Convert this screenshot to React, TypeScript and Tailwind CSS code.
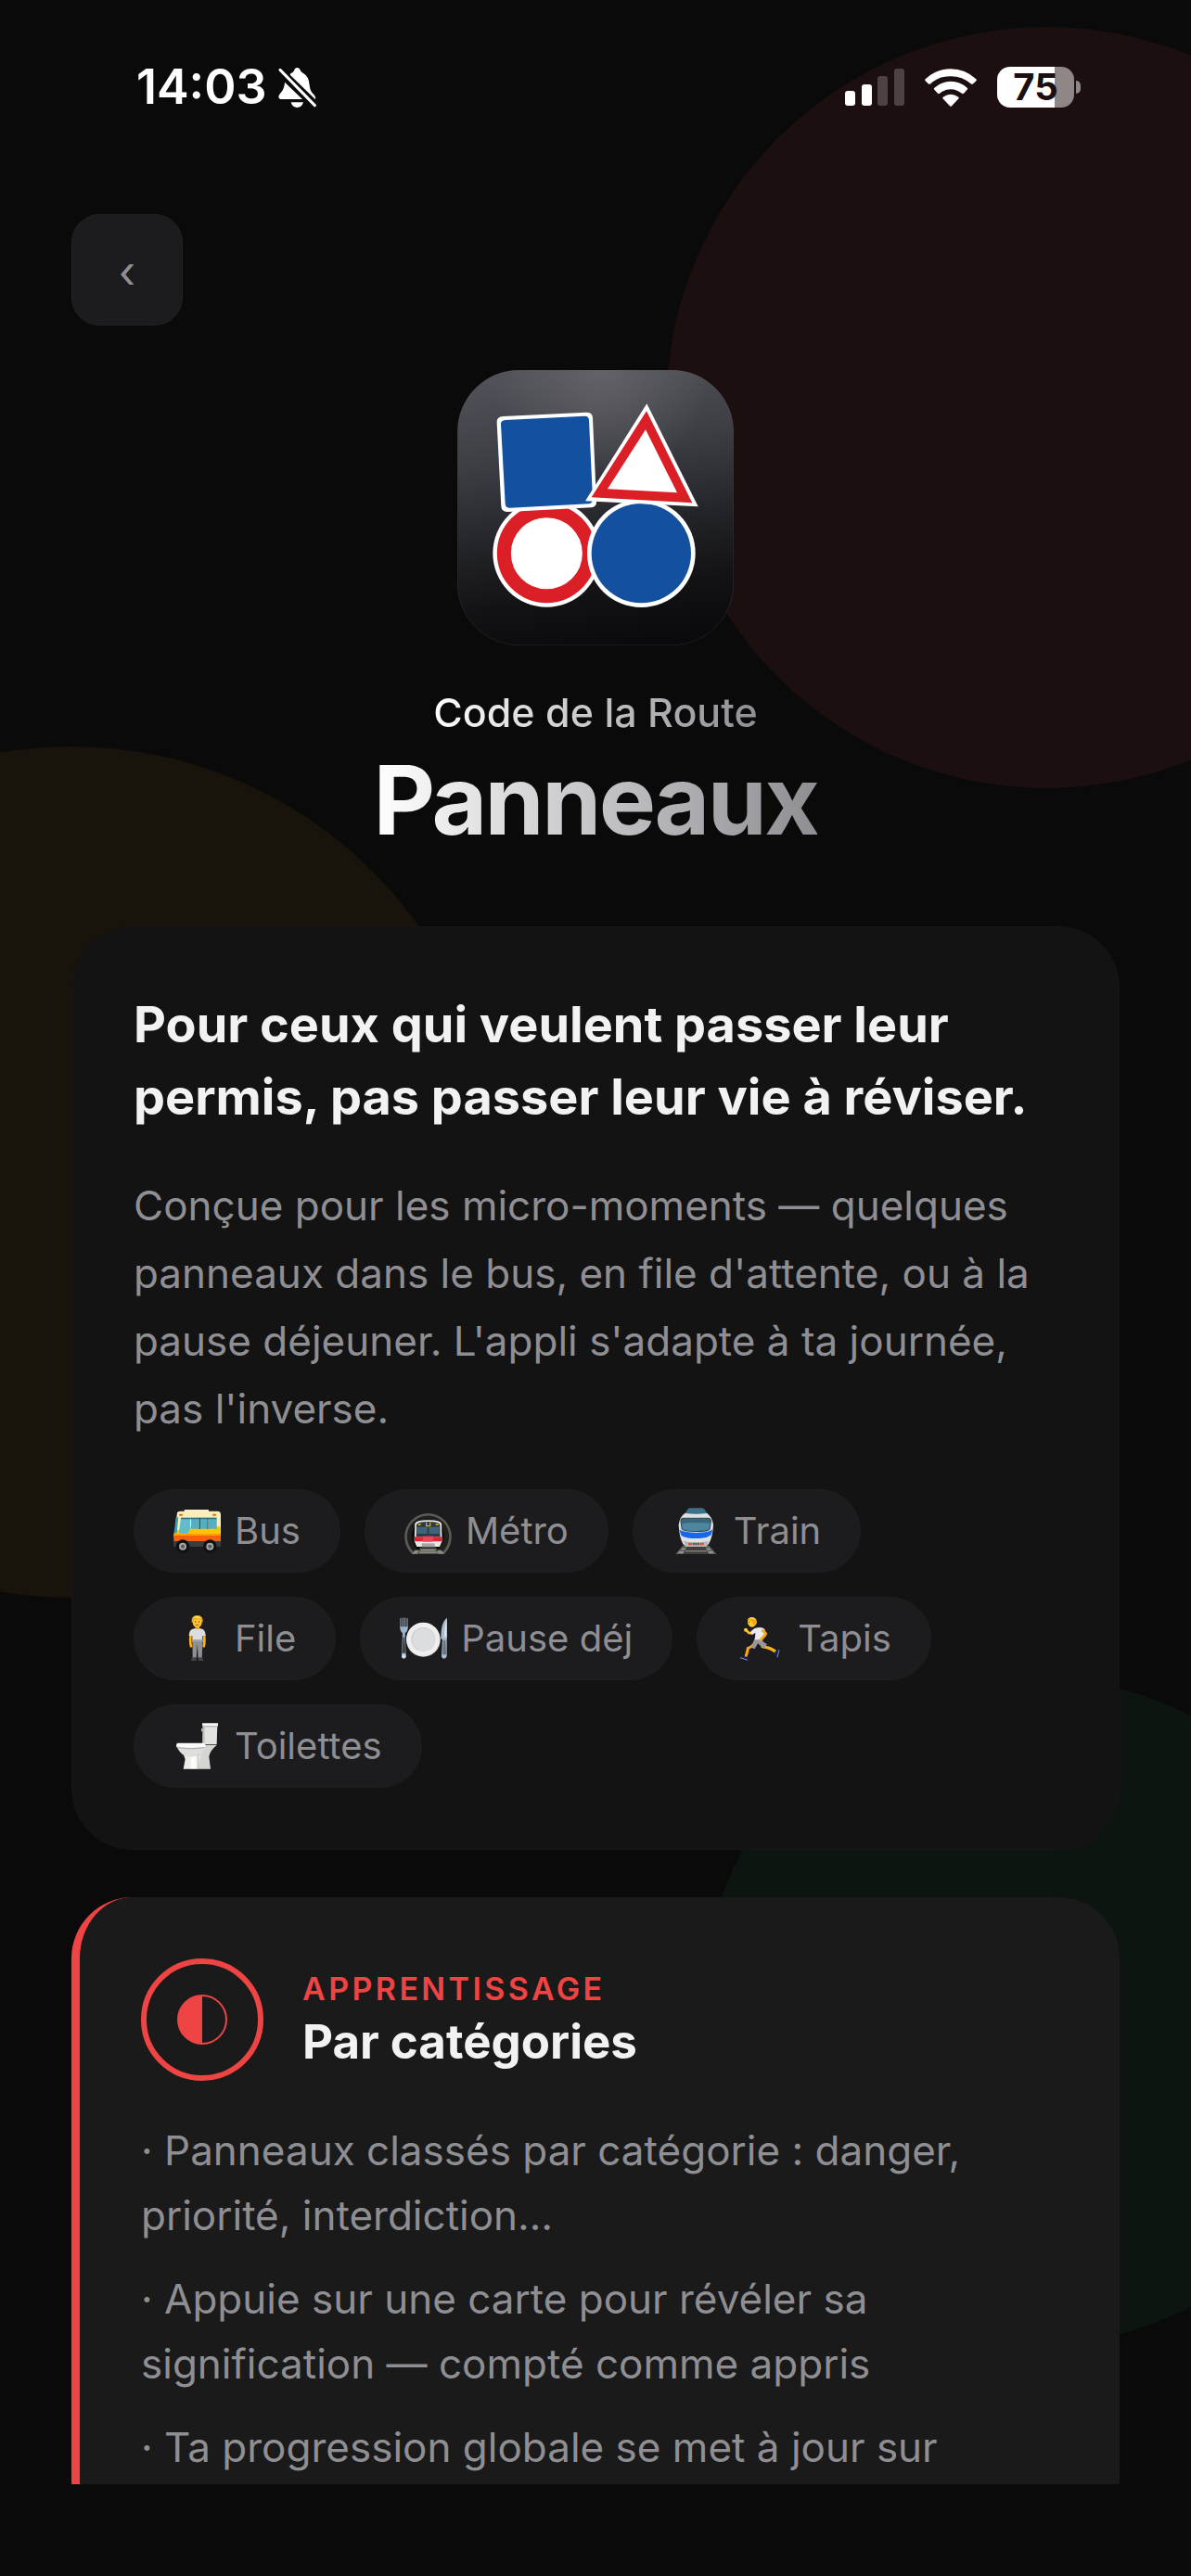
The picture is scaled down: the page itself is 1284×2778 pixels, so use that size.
import React from 'react';

interface Place {
  label: string;
  icon: React.ReactNode;
}

const BusIcon = () => (
  <svg viewBox="0 0 153 153" className="size-[51px]">
    <path d="M36 6h77l3 8H34z" fill="#f7efc9" />
    <path d="M12 16q2-5 9-5h122q9 0 10 10v70H3z" fill="#fbeebc" />
    <path d="M3 72h45l8-11h96v36H1z" fill="#ffc400" />
    <path d="M1 84h152v24H1z" fill="#f9620c" />
    <path d="M1 84h152v6H1z" fill="#ff9f00" />
    <path d="M8 30l8 1-5 51H2z" fill="#3f9db3" />
    <path d="M24 32h30v36l-7 15H22q-5 0-4-7z" fill="#62bccd" />
    <path d="M57 32h26v36H57zM87 32h22v36H87zM112 32h25q3 0 3 4v32h-28z" fill="#54afc2" />
    <path d="M24 32h116v5H24z" fill="#2f7484" />
    <path d="M83 32h4v37h-4zM109 32h3v37h-3z" fill="#2b5664" />
    <path d="M0 108h153v18H0z" fill="#3b3c40" />
    <rect x="18" y="20" width="12" height="6" rx="2" fill="#e8720c" />
    <rect x="126" y="20" width="12" height="6" rx="2" fill="#e8720c" />
    <circle cx="30" cy="125" r="22" fill="#101113" />
    <circle cx="118" cy="125" r="22" fill="#101113" />
    <circle cx="30" cy="125" r="12" fill="#a3a5a8" />
    <circle cx="118" cy="125" r="12" fill="#a3a5a8" />
    <circle cx="30" cy="125" r="6" fill="#55585c" />
    <circle cx="118" cy="125" r="6" fill="#55585c" />
  </svg>
);

const MetroIcon = () => (
  <svg viewBox="0 0 153 153" className="size-[51px]">
    <path d="M24 149A76 76 0 1 1 129 149z" fill="#5a5a57" />
    <path d="M30 143A68 68 0 1 1 123 143z" fill="#20201f" />
    <ellipse cx="76" cy="92" rx="52" ry="54" fill="#060606" />
    <path d="M34 137h85l10 12H24z" fill="#8b8b85" />
    <path d="M50 128h54l6 21H42z" fill="#45453f" />
    <path d="M52 137h49M47 144h60" stroke="#c2c2ba" strokeWidth="3" />
    <path d="M34 52q2-12 43-12t43 12l2 56-8 18H40l-8-18z" fill="#e9e9ea" />
    <path d="M39 54q3-9 38-9t38 9l1 40H38z" fill="#32383d" />
    <path d="M40 62h34v28H40zM79 62h34v28H79z" fill="#41647a" />
    <path d="M40 84h34v7H40zM79 84h34v7H79z" fill="#263d4b" />
    <path d="M71 47v12h12V47" fill="none" stroke="#c6b91e" strokeWidth="4" />
    <path d="M44 54h9M101 54h9" stroke="#d8c928" strokeWidth="5" />
    <path d="M33 94h88l1 15H32z" fill="#df2436" />
    <path d="M60 92h33v18H60z" fill="#f0435a" />
    <circle cx="44" cy="117" r="4" fill="#f3e9a0" />
    <circle cx="109" cy="117" r="4" fill="#f3e9a0" />
    <path d="M56 115h42v12H56z" fill="#a5a6a8" />
  </svg>
);

const TrainIcon = () => (
  <svg viewBox="0 0 153 153" className="size-[51px]">
    <path d="M34 122h84l24 28H10z" fill="#64625f" />
    <path d="M30 134h92M20 144h112" stroke="#a4a19d" strokeWidth="4" />
    <path d="M48 122h56l14 28H34z" fill="#403f3e" />
    <path d="M42 140h69" stroke="#84817e" strokeWidth="4" />
    <path d="M43 16q33-8 66 0 20 13 23 39-1 39-15 62l-9 8H43l-9-8Q21 94 20 55q3-26 23-39z" fill="#dfe0e4" />
    <path d="M54 1h43q11 6 13 17-34 5-67 0Q45 7 54 1z" fill="#3e7188" />
    <path d="M36 32h79q9 0 11 10l-4 27q-3 9-46 9t-47-9l-4-27q2-10 11-10z" fill="#29414d" />
    <path d="M38 35h75q9 0 10 8l-4 25q-3 7-43 7t-44-7l-4-25q2-8 10-8z" fill="#4c879f" />
    <path d="M28 43q2-8 10-8h75q9 0 10 8l-1 8q-46-7-93 1z" fill="#3b6579" />
    <path d="M22 70q9 10 54 11 44-1 54-11l-5 18q-14 11-49 11T28 89z" fill="#1768e8" />
    <path d="M35 107q38 10 82 0l-7 18H43z" fill="#b5b6b9" />
    <rect x="51" y="113" width="13" height="8" rx="2" fill="#e94d2a" />
    <rect x="88" y="113" width="13" height="8" rx="2" fill="#e94d2a" />
    <path d="M67 113h4v8h-4zM74 113h4v8h-4zM81 113h4v8h-4z" fill="#303136" />
  </svg>
);

const PersonIcon = () => (
  <svg viewBox="0 0 153 153" className="size-[51px]">
    <path d="M71 34h13v14H71z" fill="#e89a0b" />
    <path d="M56 62q-3 27 1 38M99 62q3 27-1 38" fill="none" stroke="#fcb414" strokeWidth="8" strokeLinecap="round" />
    <path d="M62 44l9-2q7 6 14 0l8 2q10 2 11 22H94v20H61V66H50q1-20 12-22z" fill="#dcdde1" />
    <path d="M61 78h34l-3 60H80l-3-45-3 45H62z" fill="#8e8e93" />
    <path d="M61 78h34v7H61z" fill="#a3a3a8" />
    <path d="M57 147q0-9 9-11h8v11zM97 147q0-9-9-11h-8v11z" fill="#434349" />
    <ellipse cx="77" cy="22" rx="15" ry="18" fill="#ffc52e" />
    <path d="M59 22q-3-21 18-22 20 1 18 22l-4 1q0-10-6-11-13 3-19 1l-3 10z" fill="#f2ab10" />
    <path d="M63 8q14-11 28 2-14-3-28-2z" fill="#ffeaa0" />
    <circle cx="71" cy="21" r="2" fill="#4c3413" />
    <circle cx="83" cy="21" r="2" fill="#4c3413" />
    <path d="M73 31h8" stroke="#c64a24" strokeWidth="3" strokeLinecap="round" />
  </svg>
);

const PlateIcon = () => (
  <svg viewBox="0 0 153 153" className="size-[51px]">
    <circle cx="76" cy="79" r="55" fill="#d8d9db" />
    <circle cx="76" cy="77" r="54" fill="#eeeeef" />
    <circle cx="76" cy="78" r="39" fill="#c6cad0" />
    <circle cx="77" cy="79" r="37" fill="#dcdddf" />
    <path d="M3 10v32M10 9v33M17 9v33M24 10v32" stroke="#a2b2c4" strokeWidth="3" strokeLinecap="round" />
    <path d="M1 37h25q0 17-9 20l3 76q-1 6-7 6t-7-6l3-76q-8-3-8-20z" fill="#9cb3cb" />
    <path d="M11 70h5l3 52H7z" fill="#3f444a" />
    <circle cx="13" cy="133" r="7" fill="#c7dcf3" />
    <path d="M153 8v66l-1 4v55q-2 7-9 7t-8-7l3-54-5-4q0-54 20-67z" fill="#a9bccf" />
    <path d="M151 16v54h-7q0-32 7-54z" fill="#d9e6f2" />
    <path d="M141 80h7l2 47h-12z" fill="#687580" />
  </svg>
);

const RunnerIcon = () => (
  <svg viewBox="0 0 153 153" className="size-[51px]">
    <path d="M61 84q-8 18-24 22-1 9-6 25" fill="none" stroke="#f9a90b" strokeWidth="9" strokeLinecap="round" strokeLinejoin="round" />
    <path d="M84 101q26 4 42 16" fill="none" stroke="#fbb316" strokeWidth="10" strokeLinecap="round" />
    <path d="M11 132l28 3 1 4-5 6q-14-2-25-9z" fill="#14205e" />
    <path d="M12 137l24 8" stroke="#c7cbd8" strokeWidth="2" />
    <path d="M134 106l5 3-5 27-6 1-3-19z" fill="#14205e" />
    <path d="M138 112l-6 24" stroke="#c7cbd8" strokeWidth="2" />
    <path d="M52 58l-12-1-10-11" fill="none" stroke="#fdb81b" strokeWidth="8" strokeLinecap="round" strokeLinejoin="round" />
    <circle cx="30" cy="47" r="6" fill="#ffca38" />
    <path d="M59 42q23-7 33 4-2 25-11 37H57q5-17 4-26l-12 5-5-7q8-9 15-13z" fill="#e9eaed" />
    <path d="M58 79h25q2 8 16 14l-10 13q-11-5-20-15l-10 18-12-5q6-13 11-25z" fill="#96979c" />
    <path d="M85 50q13 8 8 13L79 79" fill="none" stroke="#f9a80d" strokeWidth="9" strokeLinecap="round" strokeLinejoin="round" />
    <ellipse cx="50" cy="22" rx="14" ry="16" fill="#ffc933" />
    <path d="M35 15Q40 4 52 6q15 3 14 19l-7 10-8-12q-1-8-16-8z" fill="#f0a911" />
    <path d="M40 11q12-8 22 3-10-4-22-3z" fill="#ffe58a" />
    <circle cx="41" cy="22" r="2" fill="#4c3413" />
  </svg>
);

const ToiletIcon = () => (
  <svg viewBox="0 0 153 153" className="size-[51px]">
    <path d="M95 6h47l-2 64H94z" fill="#e2e2e0" />
    <path d="M95 10h6v60h-6z" fill="#c3c3c1" />
    <path d="M93 1h51v9H94z" fill="#f6f6f5" />
    <path d="M94 10h49v3H94z" fill="#a9a9a7" />
    <path d="M90 18h5v10h-5z" fill="#b9b9b7" />
    <path d="M92 72h48q-22 18-25 37l5 40H78l6-50z" fill="#d5d5d3" />
    <path d="M33 104h55l-8 45H32l6-32z" fill="#ececeb" />
    <path d="M56 108h17v40H56z" fill="#fbfbfb" />
    <path d="M80 106v43" stroke="#9d9d9b" strokeWidth="2" />
    <path d="M10 74h92q-2 18-14 27-22 14-50 6-20-10-28-33z" fill="#dededc" />
    <path d="M14 65h84q6 2 6 7t-6 8H15q-7-2-6-9 1-5 5-6z" fill="#fafafa" />
    <path d="M11 80q46 7 89 0" fill="none" stroke="#a5a5a3" strokeWidth="3" />
  </svg>
);

const PLACES: Place[] = [
  { label: 'Bus', icon: <BusIcon /> },
  { label: 'Métro', icon: <MetroIcon /> },
  { label: 'Train', icon: <TrainIcon /> },
  { label: 'File', icon: <PersonIcon /> },
  { label: 'Pause déj', icon: <PlateIcon /> },
  { label: 'Tapis', icon: <RunnerIcon /> },
  { label: 'Toilettes', icon: <ToiletIcon /> },
];

const FEATURES = [
  'Panneaux classés par catégorie : danger, priorité, interdiction…',
  'Appuie sur une carte pour révéler sa signification — compté comme appris',
  'Ta progression globale se met à jour sur',
];

const StatusBar = () => (
  <div className="flex h-[188px] shrink-0 items-center justify-between pr-[119px] pl-[147px] text-white">
    <div className="flex items-center gap-3">
      <span className="text-[52px] leading-[60px] font-semibold">14:03</span>
      {/* muted bell */}
      <svg viewBox="0 0 123 135" className="h-[45px] w-[41px]" fill="currentColor">
        <path d="M40 22q10-4 11-9 3-10 10-10t11 10q1 4 9 8 18 10 20 38 1 20 16 33 6 8 3 14L38 26z" />
        <path d="M21 50l57 55H9q-8-1-8-9 1-5 7-12 12-13 13-34z" />
        <path d="M41 115h40q-5 17-20 17t-20-17z" />
        <path d="M6 10l112 115" stroke="currentColor" strokeWidth="9" strokeLinecap="round" />
      </svg>
    </div>
    <div className="flex items-center gap-[22px]">
      <svg viewBox="0 0 64 40" className="h-[40px] w-[64px]" fill="currentColor">
        <rect x="0" y="24" width="11" height="16" rx="3" />
        <rect x="18" y="17" width="11" height="23" rx="3" />
        <rect x="35" y="8" width="11" height="32" rx="3" opacity="0.22" />
        <rect x="53" y="0" width="11" height="40" rx="3" opacity="0.22" />
      </svg>
      <svg viewBox="0 0 168 122" className="h-[41px] w-[56px]" fill="currentColor">
        <path d="M84 0q47 0 82 33 3 3 0 6l-10 10q-3 2-6 0-28-25-66-25T18 49q-3 2-6 0L2 39q-3-3 0-6Q37 0 84 0z" />
        <path d="M84 41q30 0 53 21 3 3 0 6l-11 12q-3 2-6 0-16-14-36-14T48 80q-3 2-6 0L31 68q-3-3 0-6 23-21 53-21z" />
        <path d="M84 83q13 0 24 8 4 3 1 6l-22 23q-3 3-6 0L59 97q-3-3 1-6 11-8 24-8z" />
      </svg>
      <div className="flex items-center gap-[2px]">
        <div className="flex h-[44px] w-[83px] items-center justify-center rounded-[14px] bg-linear-to-r from-white from-75% to-[#8e8786] to-75% text-[40px] leading-[44px] font-bold text-[#1b0f0f]">
          75
        </div>
        <div className="h-[14px] w-[5px] rounded-r-full bg-[#8e8786]" />
      </div>
    </div>
  </div>
);

const AppIcon = () => (
  <svg viewBox="0 0 894 891" className="h-[297px] w-[298px]">
    <defs>
      <linearGradient id="tile" x1="0.45" y1="0" x2="0.6" y2="1">
        <stop offset="0" stopColor="#505158" />
        <stop offset="0.3" stopColor="#3c3d43" />
        <stop offset="0.6" stopColor="#212226" />
        <stop offset="0.8" stopColor="#131316" />
        <stop offset="1" stopColor="#0a0a0e" />
      </linearGradient>
      <radialGradient id="shine" cx="0.52" cy="0" r="0.4">
        <stop offset="0" stopColor="#6a6a6e" stopOpacity="0.7" />
        <stop offset="1" stopColor="#6a6a6e" stopOpacity="0" />
      </radialGradient>
    </defs>
    <rect x="1" y="1" width="892" height="889" rx="198" fill="url(#tile)" />
    <rect x="1" y="1" width="892" height="889" rx="198" fill="url(#shine)" stroke="#ffffff" strokeOpacity="0.08" strokeWidth="3" />
    <circle cx="289" cy="593" r="174" fill="#fff" />
    <circle cx="289" cy="593" r="138" fill="none" stroke="#da1f26" strokeWidth="45" />
    <path d="M148 150L418 137Q437 136 438 155L450 425Q451 443 433 445L163 459Q144 460 142 442L128 170Q127 151 148 150z" fill="#fff" />
    <path d="M155 162L411 149Q425 148 426 162L438 417Q439 431 425 433L170 446Q156 447 155 433L141 177Q140 163 155 162z" fill="#13509f" />
    <circle cx="595" cy="593" r="175" fill="#fff" />
    <circle cx="595" cy="593" r="161" fill="#13509f" />
    <path d="M613 109L779 442L414 424z" fill="#fff" />
    <path d="M612 133L760 430L434 412z" fill="#da1f26" />
    <path d="M609 193L711 397L486 385z" fill="#fff" />
  </svg>
);

const App: React.FC = () => {
  return (
    <div className="relative isolate flex h-screen flex-col overflow-hidden bg-[#0a0a0a] font-[Inter,sans-serif]">
      {/* background discs */}
      <div className="absolute top-[29px] right-[-255px] -z-10 size-[821px] rounded-full bg-[#1b0f0f]" />
      <div className="absolute top-[805px] left-[-382px] -z-10 size-[918px] rounded-full bg-[#18130b]" />
      <div className="absolute top-[1809px] right-[-192px] -z-10 size-[720px] rounded-full bg-[#0d1511]" />

      <StatusBar />

      <main className="min-h-0 flex-1 overflow-hidden px-[77px] pt-[43px]">
        <button
          type="button"
          aria-label="Retour"
          className="flex size-[120px] items-center justify-center rounded-[30px] border border-[#222224] bg-[#1c1c1e] pt-1 text-[48px] leading-[60px] text-[#8e8e93]"
        >
          ‹
        </button>

        <header className="mt-12 flex flex-col items-center">
          <AppIcon />
          <p className="mt-11 bg-linear-to-r from-white to-[#8e8e93] bg-clip-text text-[43px] leading-[56px] font-medium text-transparent">
            Code de la Route
          </p>
          <h1 className="mt-[11px] bg-linear-to-r from-white to-[#8e8e93] bg-clip-text text-[103px] leading-[112px] font-bold tracking-tight text-transparent">
            Panneaux
          </h1>
        </header>

        <section className="mt-20 rounded-[66px] border border-[#161616] bg-[#131313] p-[66px]">
          <h2 className="text-[54px] leading-[78px] font-bold text-[#f2f2f2]">
            Pour ceux qui veulent passer leur permis, pas passer leur vie à réviser.
          </h2>
          <p className="mt-[42px] text-[44px] leading-[73px] text-[#8e8e93]">
            Conçue pour les micro-moments — quelques panneaux dans le bus, en file d'attente, ou à la pause
            déjeuner. L'appli s'adapte à ta journée, pas l'inverse.
          </p>
          <ul className="mt-[50px] flex flex-wrap gap-[26px]">
            {PLACES.map((place) => (
              <li
                key={place.label}
                className="flex h-[90px] items-center gap-[15px] rounded-full border border-[#1f1f21] bg-[#1c1c1e] px-[42px] text-[40px] leading-[48px] text-[#8e8e93]"
              >
                {place.icon}
                {place.label}
              </li>
            ))}
          </ul>
        </section>

        <section className="mt-[51px] rounded-[66px] border-l-[9px] border-[#ef4444] bg-[#1a1a1a] p-[66px]">
          <div className="flex items-center gap-[42px]">
            <div className="flex size-[132px] items-center justify-center rounded-full border-[6px] border-[#ef4444]">
              <svg viewBox="0 0 54 54" className="size-[54px]">
                <circle cx="27" cy="27" r="26" fill="none" stroke="#ef4444" strokeWidth="2" />
                <path d="M27 1a26 26 0 0 0 0 52z" fill="#ef4444" />
              </svg>
            </div>
            <div className="flex flex-col gap-[3px]">
              <p className="text-[34px] leading-[44px] font-semibold tracking-widest text-[#ef4444]">APPRENTISSAGE</p>
              <h3 className="text-[51px] leading-[64px] font-bold text-[#f2f2f2]">Par catégories</h3>
            </div>
          </div>
          <ul className="mt-10 flex flex-col gap-5 text-[44px] leading-[70px] text-[#8e8e93]">
            {FEATURES.map((feature) => (
              <li key={feature}>{`· ${feature}`}</li>
            ))}
          </ul>
        </section>
      </main>

      <footer className="h-[99px] shrink-0" />
    </div>
  );
};

export default App;
